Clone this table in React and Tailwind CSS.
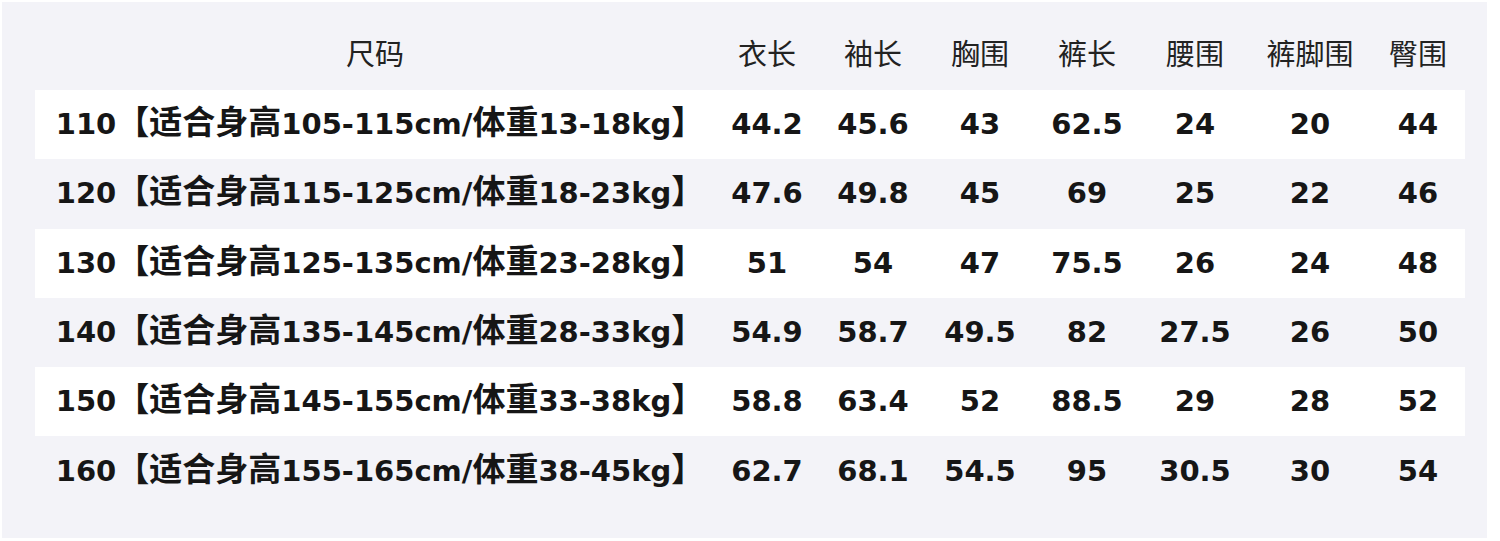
const HEADERS = ['衣长', '袖长', '胸围', '裤长', '腰围', '裤脚围', '臀围'];

const ROWS = [
  ['110【适合身高105-115cm/体重13-18kg】', '44.2', '45.6', '43', '62.5', '24', '20', '44'],
  ['120【适合身高115-125cm/体重18-23kg】', '47.6', '49.8', '45', '69', '25', '22', '46'],
  ['130【适合身高125-135cm/体重23-28kg】', '51', '54', '47', '75.5', '26', '24', '48'],
  ['140【适合身高135-145cm/体重28-33kg】', '54.9', '58.7', '49.5', '82', '27.5', '26', '50'],
  ['150【适合身高145-155cm/体重33-38kg】', '58.8', '63.4', '52', '88.5', '29', '28', '52'],
  ['160【适合身高155-165cm/体重38-45kg】', '62.7', '68.1', '54.5', '95', '30.5', '30', '54'],
];

const GRID = 'grid w-[1430px] grid-cols-[680px_104px_108px_106px_108px_108px_122px_94px]';

// CJK glyphs sit a little larger than the latin digits in the size label
function SizeLabel({ text }) {
  const parts = text.split(/([\u3010\u3011]|[\u4e00-\u9fff]+)/).filter(Boolean);
  return parts.map((p, i) => {
    if (p === '【' || p === '】') {
      return <span key={i} className="text-[33px] leading-[0] font-['Noto_Sans_CJK_JP',sans-serif]">{p}</span>;
    }
    if (/[\u4e00-\u9fff]/.test(p)) {
      return <span key={i} className="text-[33px] leading-[0]">{p}</span>;
    }
    return <span key={i}>{p}</span>;
  });
}

export default function App() {
  return (
    <div className="w-[1500px] h-[541px] bg-white p-[2px] font-['DejaVu_Sans','Noto_Sans_CJK_SC',sans-serif] text-[#161616]">
      <div className="w-[1485px] h-[536px] bg-[#f3f3f8] pt-[19px] pl-[33px]">
        <div className={clsx(GRID, 'h-[69px] items-center text-[29px] font-normal text-[#222]')}>
          <div className="text-center">尺码</div>
          {HEADERS.map(h => (
            <div key={h} className="text-center">{h}</div>
          ))}
        </div>
        {ROWS.map((row, i) => (
          <div key={row[0]}
            className={clsx(GRID, 'h-[69.3px] items-center text-[29px] font-bold', i % 2 === 0 ? 'bg-white' : 'bg-transparent')}>
            <div className="text-center whitespace-nowrap leading-none pl-[10px]"><SizeLabel text={row[0]} /></div>
            {row.slice(1).map((cell, j) => (
              <div key={j} className="text-center whitespace-nowrap leading-none">{cell}</div>
            ))}
          </div>
        ))}
      </div>
    </div>
  );
}

function clsx(...parts) {
  return parts.filter(Boolean).join(' ');
}
